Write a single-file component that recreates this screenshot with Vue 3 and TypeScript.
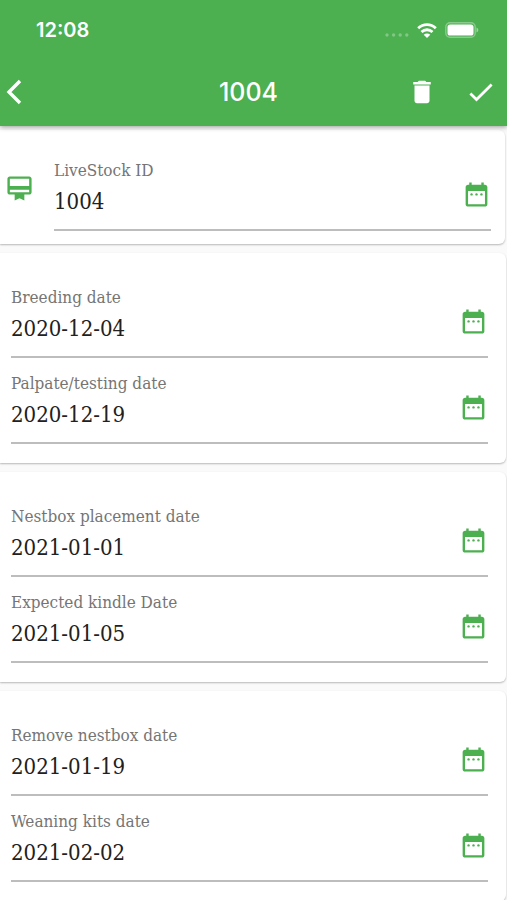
<script setup lang="ts">
import { reactive, ref } from 'vue'

interface Field {
  id: string
  label: string
  value: string
}

const livestockId = ref<string>('1004')

const groups = reactive<Field[][]>([
  [
    { id: 'breeding', label: 'Breeding date', value: '2020-12-04' },
    { id: 'palpate', label: 'Palpate/testing date', value: '2020-12-19' },
  ],
  [
    { id: 'nestbox', label: 'Nestbox placement date', value: '2021-01-01' },
    { id: 'kindle', label: 'Expected kindle Date', value: '2021-01-05' },
  ],
  [
    { id: 'remove', label: 'Remove nestbox date', value: '2021-01-19' },
    { id: 'weaning', label: 'Weaning kits date', value: '2021-02-02' },
  ],
])
</script>

<template>
  <div class="screen">
    <header class="top">
      <div class="status">
        <span class="time">12:08</span>
        <div class="signals">
          <svg class="dots" viewBox="0 0 24 4" aria-hidden="true">
            <circle cx="2" cy="2" r="1.7" /><circle cx="8.6" cy="2" r="1.7" />
            <circle cx="15.2" cy="2" r="1.7" /><circle cx="21.8" cy="2" r="1.7" />
          </svg>
          <svg class="wifi" viewBox="0 0 20 15" aria-hidden="true">
            <path d="M1.2 5.2C6.2.4 13.8.4 18.8 5.2" />
            <path d="M4.5 8.9c3.1-2.9 7.9-2.9 11 0" />
            <path class="solid" d="M10 15 6.7 11.7c1.8-1.7 4.8-1.7 6.6 0z" />
          </svg>
          <svg class="battery" viewBox="0 0 34 16" aria-hidden="true">
            <rect class="shell" x=".8" y=".8" width="29.4" height="14.4" rx="4.2" />
            <rect class="charge" x="2.5" y="2.5" width="26" height="11" rx="2.6" />
            <path class="tip" d="M31.5 5.5c2.4.8 2.4 4.2 0 5z" />
          </svg>
        </div>
      </div>
      <nav class="bar">
        <button class="action back" type="button" aria-label="Back">
          <svg viewBox="0 0 16 26"><path d="M14 2 3 13l11 11" /></svg>
        </button>
        <h1 class="title">1004</h1>
        <div class="actions">
          <button class="action trash" type="button" aria-label="Delete">
            <svg viewBox="0 0 24 24"><path d="M6 19c0 1.1.9 2 2 2h8c1.1 0 2-.9 2-2V6.700H6zM19 4h-3.500l-1-1h-5l-1 1H5v2h14z" /></svg>
          </button>
          <button class="action check" type="button" aria-label="Save">
            <svg viewBox="0 0 24 24"><path d="M3.5 13.2 8.4 18 20.5 6" /></svg>
          </button>
        </div>
      </nav>
    </header>

    <main class="cards">
      <section class="card id-card">
        <svg class="membership" viewBox="0 0 24 24" aria-hidden="true">
          <path d="M20 2H4c-1.110 0-2 .89-2 2v11c0 1.110.89 2 2 2h4v5l4-2 4 2v-5h4c1.110 0 2-.89 2-2V4c0-1.110-.89-2-2-2zm0 13H4v-2h16v2zm0-5H4V4h16v6z" />
        </svg>
        <div class="field">
          <div class="entry">
            <label for="livestock">LiveStock ID</label>
            <input id="livestock" v-model="livestockId" type="text" />
          </div>
          <button class="pick" type="button" aria-label="Choose LiveStock ID">
            <svg viewBox="0 0 24 24">
              <path fill-rule="evenodd" d="M19 4h-1V2h-2v2H8V2H6v2H5c-1.1 0-2 .9-2 2v14c0 1.1.9 2 2 2h14c1.1 0 2-.9 2-2V6c0-1.1-.9-2-2-2zm0 16H5V9h14z" />
              <circle cx="7.9" cy="11.9" r="1" /><circle cx="12" cy="11.9" r="1" /><circle cx="16.1" cy="11.9" r="1" />
            </svg>
          </button>
        </div>
      </section>

      <section v-for="(group, index) in groups" :key="index" class="card">
        <div v-for="field in group" :key="field.id" class="field">
          <div class="entry">
            <label :for="field.id">{{ field.label }}</label>
            <input :id="field.id" v-model="field.value" type="text" />
          </div>
          <button class="pick" type="button" :aria-label="'Choose ' + field.label">
            <svg viewBox="0 0 24 24">
              <path fill-rule="evenodd" d="M19 4h-1V2h-2v2H8V2H6v2H5c-1.1 0-2 .9-2 2v14c0 1.1.9 2 2 2h14c1.1 0 2-.9 2-2V6c0-1.1-.9-2-2-2zm0 16H5V9h14z" />
              <circle cx="7.9" cy="11.9" r="1" /><circle cx="12" cy="11.9" r="1" /><circle cx="16.1" cy="11.9" r="1" />
            </svg>
          </button>
        </div>
      </section>
    </main>
  </div>
</template>

<style>
body {
  margin: 0;
  background: #fafafa;
}
</style>

<style scoped>
.screen {
  min-height: 100vh;
  background: #fafafa;
  font-family: 'Roboto Slab', 'DejaVu Serif Condensed', 'DejaVu Serif', serif;
}

.top {
  position: relative;
  box-sizing: border-box;
  height: 126px;
  background: #4caf50;
  color: #fff;
  font-family: Inter, 'Liberation Sans', sans-serif;
  box-shadow: 0 1px 5px rgba(0, 0, 0, 0.4);
}

.status {
  display: flex;
  align-items: center;
  justify-content: space-between;
  height: 60px;
  padding: 0 28px 0 36px;
}

.time {
  font-size: 20px;
  font-weight: 600;
}

.signals {
  display: flex;
  align-items: center;
  gap: 8px;
}

.dots {
  width: 24px;
  height: 4px;
  margin-top: 10px;
  fill: rgba(255, 255, 255, 0.3);
}

.wifi {
  width: 20px;
  height: 15px;
  fill: none;
  stroke: #fff;
  stroke-width: 2.8;
}

.wifi .solid {
  fill: #fff;
  stroke: none;
}

.battery {
  width: 34px;
  height: 16px;
  fill: #fff;
}

.battery .shell {
  fill: none;
  stroke: rgba(255, 255, 255, 0.35);
  stroke-width: 1.4;
}

.battery .tip {
  fill: rgba(255, 255, 255, 0.45);
}

.bar {
  display: grid;
  grid-template-columns: 1fr auto 1fr;
  align-items: center;
  height: 64px;
  padding: 0 11px 0 6px;
}

.title {
  margin: 0;
  padding-right: 5px;
  font-size: 25px;
  font-weight: 500;
}

.action,
.pick {
  display: flex;
  margin: 0;
  padding: 0;
  border: 0;
  background: none;
  cursor: pointer;
}

.action svg {
  fill: none;
  stroke: #fff;
}

.back svg {
  width: 16px;
  height: 26px;
  stroke-width: 3.4;
}

.actions {
  display: flex;
  align-items: center;
  justify-content: flex-end;
  gap: 29px;
}

.trash svg {
  width: 30px;
  height: 30px;
  fill: #fff;
  stroke: none;
}

.check svg {
  width: 30px;
  height: 30px;
  stroke-width: 2.2;
}

.cards {
  display: flex;
  flex-direction: column;
  gap: 9px;
  padding: 4px 1px 0 0;
}

.card {
  padding: 19px 18px 19px 11px;
  border-radius: 0 6px 6px 0;
  background: #fff;
  box-shadow: 0 1px 2px rgba(0, 0, 0, 0.27);
}

.id-card {
  display: flex;
  align-items: center;
  gap: 20px;
  margin-right: 1px;
  padding: 15px 14px 13px 5px;
}

.membership {
  flex: none;
  width: 29px;
  height: 29px;
  fill: #4caf50;
}

.field {
  display: flex;
  flex: 1;
  align-items: center;
  box-sizing: border-box;
  height: 86px;
  border-bottom: 2px solid #bdbdbd;
}

.entry {
  display: flex;
  flex: 1;
  flex-direction: column;
  min-width: 0;
  padding-top: 8px;
}

label {
  color: #757575;
  font-size: 17px;
  line-height: 20px;
}

input {
  width: 100%;
  height: 42px;
  padding: 0;
  border: 0;
  outline: 0;
  background: none;
  color: #212121;
  font-family: inherit;
  font-size: 22px;
}

.pick {
  padding: 14px 0 0;
}

.pick svg {
  width: 29px;
  height: 29px;
  fill: #4caf50;
}
</style>
